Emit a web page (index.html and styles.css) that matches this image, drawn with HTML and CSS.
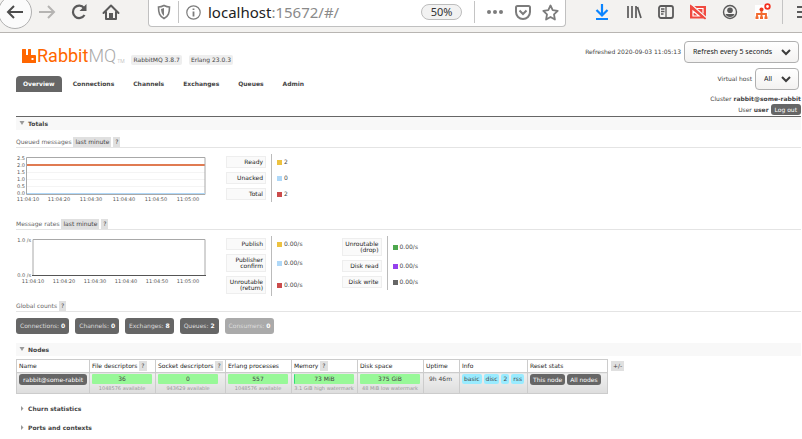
FILE: index.html
```html
<!DOCTYPE html>
<html lang="en">
<head>
<meta charset="utf-8">
<title>RabbitMQ Management</title>
<link rel="stylesheet" href="styles.css">
</head>
<body>
<header class="toolbar">
  <nav class="nav-buttons" aria-label="Browser">
    <button class="tool back" aria-label="Back"><svg width="20" height="20" viewBox="0 0 20 20"><path d="M18 10H3M9 4L3 10l6 6" fill="none" stroke="#4c4c4c" stroke-width="2"/></svg></button>
    <button class="tool" aria-label="Forward"><svg width="20" height="20" viewBox="0 0 20 20"><path d="M2 10h15M11 4l6 6-6 6" fill="none" stroke="#b5b4b2" stroke-width="2"/></svg></button>
    <button class="tool" aria-label="Reload"><svg width="20" height="20" viewBox="0 0 20 20"><path d="M15 6A6.200 6.200 0 1 0 15.500 13" fill="none" stroke="#5a5a5a" stroke-width="2.200"/><path d="M17.500 2v7h-7z" fill="#5a5a5a"/></svg></button>
    <button class="tool" aria-label="Home"><svg width="20" height="20" viewBox="0 0 20 20"><path d="M2.500 11L10 3.500 17.500 11M5 10v7h10v-7" fill="none" stroke="#5a5a5a" stroke-width="2" stroke-linejoin="round" stroke-linecap="round"/><path d="M8 11h4v6H8z" fill="#5a5a5a"/></svg></button>
  </nav>
  <div class="urlbar">
    <svg width="14" height="16" viewBox="0 0 14 16"><path d="M7 1.500C5 2.500 3 3 1.500 3c0 6 1 9 5.500 11.500C11.500 12 12.500 9 12.500 3 11 3 9 2.500 7 1.500z" fill="none" stroke="#7c7c7c" stroke-width="1.600"/><path d="M7 4v8C4.800 10 4.200 8 4 5z" fill="#7c7c7c"/></svg>
    <span class="divider"></span>
    <svg class="info-icon" width="15" height="15" viewBox="0 0 15 15"><circle cx="7.500" cy="7.500" r="6.700" fill="none" stroke="#7c7c7c" stroke-width="1.200"/><path d="M7.500 6.500v5M7.500 3.500v1.600" stroke="#7c7c7c" stroke-width="1.800"/></svg>
    <span class="url">localhost<span class="url-rest">:15672/#/</span></span>
    <button class="zoom">50%</button>
    <span class="divider"></span>
    <svg class="dots" width="16" height="4" viewBox="0 0 16 4" fill="#7c7c7c"><circle cx="2" cy="2" r="2"/><circle cx="8" cy="2" r="2"/><circle cx="14" cy="2" r="2"/></svg>
    <svg class="pocket" width="16" height="15" viewBox="0 0 16 15"><path d="M2.500 1h11Q15 1 15 2.500V7a7 7 0 0 1-14 0V2.500Q1 1 2.500 1z" fill="none" stroke="#7c7c7c" stroke-width="2"/><path d="M4.500 5.500L8 9l3.500-3.500" fill="none" stroke="#7c7c7c" stroke-width="2"/></svg>
    <svg width="17" height="17" viewBox="0 0 17 17"><path d="M8.500 1.500l2.200 4.700 5 .7-3.700 3.500.9 5.100-4.400-2.500-4.400 2.500.9-5.100L1.300 6.900l5-.7z" fill="none" stroke="#7c7c7c" stroke-width="1.800" stroke-linejoin="round"/></svg>
  </div>
  <div class="actions">
    <button class="tool" aria-label="Downloads"><svg width="16" height="18" viewBox="0 0 16 18"><path d="M8 1v11M2.500 7L8 12.500 13.500 7M2 16h12" fill="none" stroke="#0a84ff" stroke-width="2.200"/></svg></button>
    <button class="tool" aria-label="Library"><svg width="16" height="16" viewBox="0 0 16 16"><path d="M2 2v12M6 2v12M10 2v12M11.500 3L15 14" fill="none" stroke="#5a5a5a" stroke-width="1.700"/></svg></button>
    <button class="tool" aria-label="Sidebars"><svg width="16" height="16" viewBox="0 0 16 16"><rect x="1" y="2" width="14" height="12" rx="2" fill="none" stroke="#5a5a5a" stroke-width="1.800"/><path d="M8 2v12M3 5h3.500M3 7.500h3.500M3 10h2.500" stroke="#5a5a5a" stroke-width="1.300"/></svg></button>
    <button class="tool" aria-label="Screenshot"><svg width="16" height="16" viewBox="0 0 16 16"><path d="M0 2h16v12.500H0z" fill="#f04a40"/><path d="M3 12V7l6 5zM7 4.500h6v5" fill="none" stroke="#fff" stroke-width="1.200"/><path d="M1 0l15 13.500" stroke="#f3f2f0" stroke-width="1.600"/><path d="M0 1l15.500 14" stroke="#f04a40" stroke-width="1.600"/></svg></button>
    <button class="tool" aria-label="Account"><svg width="16" height="16" viewBox="0 0 16 16"><circle cx="8" cy="8" r="6.500" fill="none" stroke="#5a5a5a" stroke-width="1.400"/><circle cx="8" cy="6.300" r="2.800" fill="#5a5a5a"/><path d="M3.500 10h9Q11.500 13 8 13t-4.500-3z" fill="#5a5a5a"/></svg></button>
    <button class="tool" aria-label="Extension"><svg width="18" height="18" viewBox="0 0 18 18"><path d="M1 2h13v15H1z" fill="#fff"/><circle cx="7.500" cy="6.500" r="2" fill="#f03c1e"/><path d="M7.500 8v7M3 15v-4h9v4" fill="none" stroke="#f26a2e" stroke-width="1.800"/><path d="M1.500 13.500h3v2.500h-3zM6 13.500h3v2.500H6zM10.500 13.500h3v2.500h-3z" fill="#f26a2e"/><circle cx="13.500" cy="3.500" r="2.300" fill="#fff" stroke="#f4301e" stroke-width="1.800"/></svg></button>
    <span class="divider"></span>
    <button class="tool menu" aria-label="Menu"><svg width="16" height="16" viewBox="0 0 16 16"><path d="M0 3h14M0 8h14M0 13h14" stroke="#5a5a5a" stroke-width="2"/></svg></button>
  </div>
</header>

<div class="page">
  <div class="head">
    <div class="head-left">
      <div class="brand">
        <a class="logo" href="#/" aria-label="RabbitMQ home"><svg width="14" height="15" viewBox="0 0 14 15"><path d="M.5 0h3q.5 0 .5.500V6h2V.5q0-.5.500-.5h2q.5 0 .5.500V6h4q1 0 1 1v6.500q0 .5-.5.500H.5q-.5 0-.5-.5V.5Q0 0 .5 0z" fill="#f60"/><path d="M9.500 9h2v2h-2z" fill="#fff"/></svg><span class="logo-rabbit">Rabbit</span><span class="logo-mq">MQ</span><span class="logo-tm">TM</span></a>
        <span class="version">RabbitMQ 3.8.7</span>
        <span class="version">Erlang 23.0.3</span>
      </div>
      <nav class="tabs">
        <a class="tab selected" href="#/">Overview</a>
        <a class="tab" href="#/connections">Connections</a>
        <a class="tab" href="#/channels">Channels</a>
        <a class="tab" href="#/exchanges">Exchanges</a>
        <a class="tab" href="#/queues">Queues</a>
        <a class="tab" href="#/users">Admin</a>
      </nav>
    </div>
    <div class="login">
      <div class="login-row"><label for="refresh">Refreshed 2020-09-03 11:05:13</label><span class="picker"><select id="refresh"><option>Refresh every 5 seconds</option></select><svg class="chevron" width="10" height="7" viewBox="0 0 10 7"><path d="M1 1l4 4 4-4" fill="none" stroke="#3c3c3c" stroke-width="2"/></svg></span></div>
      <div class="login-row vhost"><label for="vhost">Virtual host</label><span class="picker"><select id="vhost"><option>All</option></select><svg class="chevron" width="10" height="7" viewBox="0 0 10 7"><path d="M1 1l4 4 4-4" fill="none" stroke="#3c3c3c" stroke-width="2"/></svg></span></div>
      <div class="login-text">Cluster <b>rabbit@some-rabbit</b></div>
      <div class="login-text">User <b>user</b> <button class="btn">Log out</button></div>
    </div>
  </div>

  <main>
    <h2 class="section first"><svg class="arrow" width="6" height="5" viewBox="0 0 6 5"><path d="M.5 0h5L3 4z" fill="#999"/></svg>Totals</h2>
    <h3 class="sub">Queued messages <button class="chip">last minute</button> <button class="chip">?</button></h3>
    <div class="stats">
      <svg class="chart" width="200" height="52" viewBox="0 0 200 52">
        <path d="M11 12.500h178M11 19.500h178M11 26.500h178M11 33.500h178" stroke="#f4f4f4"/>
        <path d="M11 12h178" stroke="#e07b52" stroke-width="2"/>
        <path d="M10.500 41.500v-37h178.500v37z" fill="none" stroke="#a8a8a8"/>
        <path d="M11 40.500h178" stroke="#aed7f8"/>
        <g class="ylabels"><text x="9" y="7">2.5</text><text x="9" y="14">2.0</text><text x="9" y="21">1.5</text><text x="9" y="28">1.0</text><text x="9" y="35">0.5</text><text x="9" y="42">0.0</text></g>
        <g class="xlabels"><text x="12" y="48">11:04:10</text><text x="43" y="48">11:04:20</text><text x="75" y="48">11:04:30</text><text x="108" y="48">11:04:40</text><text x="140" y="48">11:04:50</text><text x="172" y="48">11:05:00</text></g>
      </svg>
      <table class="legend">
        <tr><th><span>Ready</span></th><td><i class="key yellow"></i>2</td></tr>
        <tr><th><span>Unacked</span></th><td><i class="key blue"></i>0</td></tr>
        <tr><th><span>Total</span></th><td><i class="key red"></i>2</td></tr>
      </table>
    </div>

    <h3 class="sub">Message rates <button class="chip">last minute</button> <button class="chip">?</button></h3>
    <div class="stats">
      <svg class="chart" width="200" height="52" viewBox="0 0 200 52">
        <path d="M17 40.500v-36h172v36" fill="none" stroke="#a8a8a8"/>
        <path d="M16 40.500h174" stroke="#555"/>
        <g class="ylabels"><text x="15" y="7">1.0 /s</text><text x="15" y="42">0.0 /s</text></g>
        <g class="xlabels"><text x="17" y="48">11:04:10</text><text x="48" y="48">11:04:20</text><text x="79" y="48">11:04:30</text><text x="110" y="48">11:04:40</text><text x="141" y="48">11:04:50</text><text x="172" y="48">11:05:00</text></g>
      </svg>
      <table class="legend">
        <tr><th><span>Publish</span></th><td><i class="key yellow"></i>0.00/s</td></tr>
        <tr><th><span>Publisher confirm</span></th><td><i class="key blue"></i>0.00/s</td></tr>
        <tr><th><span>Unroutable (return)</span></th><td><i class="key red"></i>0.00/s</td></tr>
      </table>
      <table class="legend">
        <tr><th><span>Unroutable (drop)</span></th><td><i class="key green"></i>0.00/s</td></tr>
        <tr><th><span>Disk read</span></th><td><i class="key purple"></i>0.00/s</td></tr>
        <tr><th><span>Disk write</span></th><td><i class="key gray"></i>0.00/s</td></tr>
      </table>
    </div>

    <h3 class="sub global">Global counts <button class="chip">?</button></h3>
    <div class="counts">
      <a class="count" href="#/connections">Connections: <b>0</b></a>
      <a class="count" href="#/channels">Channels: <b>0</b></a>
      <a class="count" href="#/exchanges">Exchanges: <b>8</b></a>
      <a class="count" href="#/queues">Queues: <b>2</b></a>
      <span class="count off">Consumers: <b>0</b></span>
    </div>

    <h2 class="section"><svg class="arrow" width="6" height="5" viewBox="0 0 6 5"><path d="M.5 0h5L3 4z" fill="#999"/></svg>Nodes</h2>
    <div class="nodes">
      <table class="list">
        <colgroup><col class="w73"><col class="w66"><col class="w70"><col class="w66"><col class="w66"><col class="w66"><col class="w36"><col class="w68"><col class="w80"></colgroup>
        <tr><th>Name</th><th>File descriptors <button class="chip">?</button></th><th>Socket descriptors <button class="chip">?</button></th><th>Erlang processes</th><th>Memory <button class="chip">?</button></th><th>Disk space</th><th>Uptime</th><th>Info</th><th>Reset stats</th></tr>
        <tr>
          <td><a class="btn" href="#/nodes/rabbit">rabbit@some-rabbit</a></td>
          <td><div class="bar">36</div><small>1048576 available</small></td>
          <td><div class="bar">0</div><small>943629 available</small></td>
          <td><div class="bar">557</div><small>1048576 available</small></td>
          <td><div class="bar used">73 MiB</div><small>3.1 GiB high watermark</small></td>
          <td><div class="bar">375 GiB</div><small>48 MiB low watermark</small></td>
          <td class="uptime">9h 46m</td>
          <td><div class="set"><span class="tag">basic</span><span class="tag">disc</span><span class="tag">2</span><span class="tag">rss</span></div></td>
          <td><div class="set"><button class="btn">This node</button><button class="btn">All nodes</button></div></td>
        </tr>
      </table>
      <button class="chip more">+/-</button>
    </div>

    <h2 class="section closed"><svg class="arrow" width="6" height="5" viewBox="0 0 6 5"><path d="M2 0v5l2.500-2.500z" fill="#999"/></svg>Churn statistics</h2>
    <h2 class="section closed"><svg class="arrow" width="6" height="5" viewBox="0 0 6 5"><path d="M2 0v5l2.500-2.500z" fill="#999"/></svg>Ports and contexts</h2>
  </main>
</div>
</body>
</html>
```
FILE: styles.css
```css
* { box-sizing: border-box; }
body {
  margin: 0;
  background: #fff;
  color: #444;
  font: 6px/8px "DejaVu Sans", sans-serif;
  overflow: hidden;
}
button, select { font: inherit; color: inherit; border: 0; margin: 0; padding: 0; background: none; }
a { color: inherit; text-decoration: none; }
h2, h3 { margin: 0; font-size: 6px; }
svg { display: block; flex: none; }

/* browser toolbar */
.toolbar {
  display: flex;
  height: 33px;
  background: #f3f2f0;
  border-bottom: 1px solid #b8b5b2;
}
.nav-buttons { display: flex; align-items: center; height: 24px; gap: 12px; padding-left: 5px; width: 148px; flex: none; }
.tool { display: block; flex: none; }
.back { position: relative; }
.back::before {
  content: "";
  position: absolute;
  inset: -7px;
  border: 1px solid #b0b0b0;
  border-radius: 50%;
  background: #fbfbfb;
}
.back svg { position: relative; }
.urlbar {
  flex: 1;
  display: flex;
  align-items: center;
  height: 27px;
  padding: 0 6px 2px 8px;
  background: #fff;
  border: 1px solid #c0c0c0;
  border-top: 0;
  border-radius: 0 0 4px 4px;
}
.divider { width: 1px; height: 22px; background: #c4c4c4; margin: 0 7px; flex: none; }
.url { flex: 1; padding-left: 7px; font: 15px/22px "Noto Sans", sans-serif; color: #222; }
.url-rest { color: #8a8a8a; }
.zoom {
  width: 41px;
  height: 16px;
  margin-right: 5px;
  border: 1px solid #bdbdbd;
  border-radius: 8px;
  background: #f2f2f2;
  color: #333;
  font: 11px/14px "Noto Sans", sans-serif;
}
.dots { margin: 0 12px 0 5px; }
.pocket { margin-right: 11px; }
.actions { display: flex; align-items: center; height: 24px; gap: 16px; padding-left: 28px; width: 236px; flex: none; overflow: hidden; }
.actions .divider { height: 26px; margin: 0 -6px; }
.menu { margin-left: 4px; }

/* page header */
.page { padding: 8px 1px 0 16px; }
.head { display: flex; justify-content: space-between; height: 75px; }
.brand { display: flex; align-items: flex-end; gap: 7px; height: 24px; margin-left: 6px; }
.logo { display: flex; align-items: flex-end; height: 22px; margin-bottom: 1px; font: 18px/16px Roboto, sans-serif; font-weight: 300; }
.logo svg { margin-right: 1px; }
.logo-rabbit { color: #f60; font-weight: 400; }
.logo-mq { color: #aaa; }
.logo-tm { color: #aaa; font-size: 5px; line-height: 6px; margin-left: 1px; }
.version { padding: 1px 2px; background: #eee; border-radius: 2px; }
.tabs { display: flex; gap: 4px; margin-top: 11px; }
.tab { padding: 4px 7px; line-height: 8px; font-weight: bold; }
.selected { background: #666; color: #fff; border-radius: 4px 4px 0 0; }
.tab + .tab { padding-right: 8px; }
.login { display: flex; flex-direction: column; align-items: flex-end; }
.login-row { display: flex; align-items: center; gap: 3px; height: 22px; margin-right: 2px; }
.vhost { margin: 5px 2px 3px 0; }
.picker { position: relative; }
.picker select {
  display: block;
  appearance: none;
  height: 22px;
  padding: 0 25px 0 8px;
  border: 1px solid #b0b0b0;
  border-radius: 4px;
  background: linear-gradient(#fff, #f3f2f1);
  color: #222;
  font: 7px/20px "Noto Sans", sans-serif;
}
.chevron { position: absolute; right: 8px; top: 8px; pointer-events: none; }
.login-text { line-height: 11px; color: #444; }
.btn { display: inline-block; padding: 1px 4px; background: #666; color: #fff; border-radius: 3px; line-height: 9px; }

/* sections */
.section {
  display: flex;
  align-items: center;
  height: 13px;
  padding-left: 3px;
  margin-top: 9px;
  background: #f8f8f8;
}
.first { height: 14px; margin-top: 0; border-top: 1px solid #666; }
.arrow { margin-right: 3px; }
.closed { background: none; margin-top: 6px; }
.sub {
  height: 12px;
  margin-top: 6px;
  border-bottom: 1px solid #e4e4e4;
  font-weight: normal;
  line-height: 11px;
  color: #666;
}
.global { margin-top: 4px; }
.chip { padding: 1px 2px; background: #e0e0e0; color: #444; line-height: 8px; }
.stats { display: flex; align-items: flex-start; padding-top: 6px; min-height: 64px; }
.chart { margin-right: 10px; margin-top: -1px; font-size: 5px; fill: #555; }
.ylabels { text-anchor: end; }
.xlabels { text-anchor: middle; }
.legend { border-collapse: collapse; margin-right: 34px; }
.legend th { padding: 2px 5px 2px 0; border-right: 1px solid #bbb; font-weight: normal; text-align: right; }
.legend th span { display: block; width: 40px; padding: 2px; border: 1px solid #eee; background: #fafafa; line-height: 6px; color: #222; }
.legend td { width: 36px; padding: 0 0 0 5px; line-height: 8px; }
.key { display: inline-block; width: 5px; height: 5px; margin-right: 2px; vertical-align: -1px; }
.yellow { background: #edc240; }
.blue { background: #afd8f8; }
.red { background: #cb4b4b; }
.green { background: #4da74d; }
.purple { background: #9440ed; }
.gray { background: #666; }
.counts { display: flex; gap: 6px; margin-top: 6px; }
.count { padding: 4px; border-radius: 3px; background: #666; color: #ddd; }
.count b { color: #fff; }
.off { background: #aaa; }

/* nodes table */
.nodes { display: flex; align-items: flex-start; gap: 3px; margin: 3px 0 8px; }
.list { width: 591px; table-layout: fixed; border-collapse: collapse; }
.list th, .list td { border: 1px solid #ccc; padding: 0 2px; text-align: left; vertical-align: top; white-space: nowrap; }
.list th { height: 13px; font-weight: normal; color: #222; line-height: 11px; }
.list td { height: 21px; padding-top: 1px; background: linear-gradient(#f0f0f0, #ddd); }
.w73 { width: 73px; } .w66 { width: 66px; } .w70 { width: 70px; } .w36 { width: 36px; } .w68 { width: 68px; } .w80 { width: 80px; }
.bar { width: 60px; background: #98f898; border-radius: 1px; text-align: center; line-height: 10px; }
.used { border-left: 1px solid #3d7; }
.list small { display: block; width: 60px; font-size: 5px; line-height: 8px; color: #999; text-align: center; }
.list td.uptime { line-height: 10px; padding-left: 5px; }
.set { display: flex; gap: 2px; }
.tag { padding: 1px 2px; background: #99ebff; border-radius: 2px; }
.set .btn { padding: 1px 3px; }
.more { margin-top: 2px; }
```
